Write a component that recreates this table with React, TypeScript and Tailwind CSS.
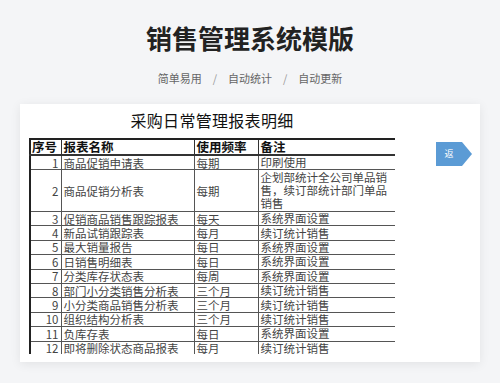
import React from 'react';

const rows: { no: number; name: string; freq: string; note: string; tall?: boolean }[] = [
  { no: 1, name: '商品促销申请表', freq: '每期', note: '印刷使用' },
  { no: 2, name: '商品促销分析表', freq: '每期', note: '企划部统计全公司单品销售，续订部统计部门单品销售', tall: true },
  { no: 3, name: '促销商品销售跟踪报表', freq: '每天', note: '系统界面设置' },
  { no: 4, name: '新品试销跟踪表', freq: '每月', note: '续订统计销售' },
  { no: 5, name: '最大销量报告', freq: '每日', note: '系统界面设置' },
  { no: 6, name: '日销售明细表', freq: '每日', note: '系统界面设置' },
  { no: 7, name: '分类库存状态表', freq: '每周', note: '系统界面设置' },
  { no: 8, name: '部门小分类销售分析表', freq: '三个月', note: '续订统计销售' },
  { no: 9, name: '小分类商品销售分析表', freq: '三个月', note: '续订统计销售' },
  { no: 10, name: '组织结构分析表', freq: '三个月', note: '续订统计销售' },
  { no: 11, name: '负库存表', freq: '每日', note: '系统界面设置' },
  { no: 12, name: '即将删除状态商品报表', freq: '每月', note: '续订统计销售' },
];

export default function App() {
  return (
    <div className="w-[500px] h-[383px] overflow-hidden bg-[#f4f5f7] flex flex-col items-center font-['Noto_Sans_CJK_SC',sans-serif]">
      {/* Header */}
      <h1 className="mt-[22px] h-[32px] leading-[32px] text-[26px] font-bold text-[#222]">
        销售管理系统模版
      </h1>
      <div className="mt-[14px] h-[20px] flex items-center gap-[11px] text-[11px] text-[#666]">
        <span>简单易用</span>
        <span className="text-[#999]">/</span>
        <span>自动统计</span>
        <span className="text-[#999]">/</span>
        <span>自动更新</span>
      </div>

      {/* Card */}
      <div className="mt-[16px] w-[460px] h-[258px] bg-white shadow-[0_2px_10px_rgba(0,0,0,0.08)] flex pl-[9px] pt-[4px]">
        <div className="w-[366px] flex flex-col">
          <div className="h-[24px] leading-[24px] text-center text-[16px] text-[#111] tracking-[0.3px]">
            采购日常管理报表明细
          </div>
          <div className="mt-[6px] h-[216px] overflow-hidden">
            <table className="w-[366px] table-fixed border-collapse border-2 border-[#222] text-[11.5px] text-[#444] leading-[12px]">
              <colgroup>
                <col className="w-[31px]" />
                <col className="w-[133px]" />
                <col className="w-[64px]" />
                <col className="w-[138px]" />
              </colgroup>
              <thead>
                <tr className="h-[16px] text-[12.5px] leading-[14px] text-[#111]">
                  <th className="border border-[#333] border-b-2 px-[1px] py-0 text-left font-bold whitespace-nowrap">序号</th>
                  <th className="border border-[#333] border-b-2 px-[2px] py-0 text-left font-bold whitespace-nowrap">报表名称</th>
                  <th className="border border-[#333] border-b-2 px-[2px] py-0 text-left font-bold whitespace-nowrap">使用频率</th>
                  <th className="border border-[#333] border-b-2 px-[2px] py-0 text-left font-bold whitespace-nowrap">备注</th>
                </tr>
              </thead>
              <tbody>
                {rows.map((r) => (
                  <tr key={r.no} className={r.tall ? 'h-[42px]' : 'h-[14.4px]'}>
                    <td className="border border-[#555] px-[2px] py-0 text-right">{r.no}</td>
                    <td className="border border-[#555] px-[2px] py-0 whitespace-nowrap">{r.name}</td>
                    <td className="border border-[#555] px-[2px] py-0 whitespace-nowrap">{r.freq}</td>
                    <td className="border border-[#555] px-[2px] py-0 leading-[13px]">{r.note}</td>
                  </tr>
                ))}
              </tbody>
            </table>
          </div>
        </div>

        {/* Back button */}
        <div className="ml-[41px] mt-[34px] w-[36px] h-[24px] flex">
          <div className="w-[26px] h-[24px] bg-[#5b9bd5] flex items-center justify-center text-[9px] text-white">
            返
          </div>
          <svg width="10" height="24" viewBox="0 0 10 24" className="block">
            <polygon points="0,0 10,12 0,24" fill="#5b9bd5" />
          </svg>
        </div>
      </div>
    </div>
  );
}
